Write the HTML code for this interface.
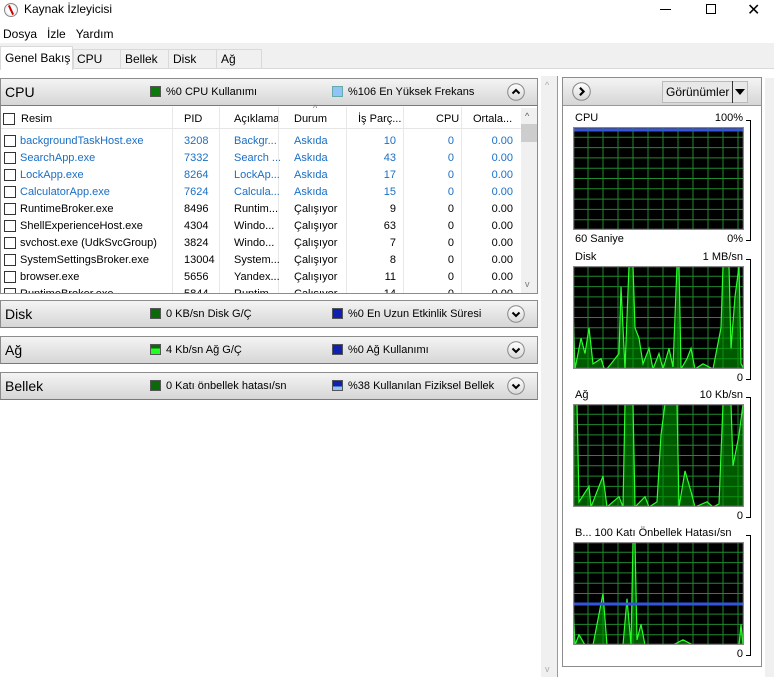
<!DOCTYPE html>
<html><head><meta charset="utf-8"><style>
*{margin:0;padding:0;box-sizing:border-box}
body{width:774px;height:677px;overflow:hidden;background:#fff;font-family:"Segoe UI","Liberation Sans","DejaVu Sans",sans-serif;font-size:11px;color:#000;position:relative}
.a{position:absolute}
.hdr{position:absolute;left:0;width:538px;height:28px;background:linear-gradient(#f4f4f4,#d6d6d6);border:1px solid #8c8c8c;border-bottom-color:#7a7a7a}
.hdr .t{position:absolute;left:4px;top:5px;font-size:14px}
.hdr .l1,.hdr .l2{position:absolute;top:7px;font-size:11px}
.hdr .l1{left:149px}.hdr .l2{left:331px}
.sq{display:inline-block;width:11px;height:11px;vertical-align:-2px;margin-right:5px;border:1px solid #555}
.btn{position:absolute;right:12px;top:4px;width:18px;height:18px}
.row{position:absolute;left:0;height:17px;width:520px}
.row span{position:absolute;top:2px}
.cb{position:absolute;left:3px;top:2px;width:12px;height:12px;border:1px solid #333;background:#fff}
.blue{color:#1a6fc4}
.col{position:absolute;top:107px;width:1px;height:186px;background:#e8e8e8}
.lbl{position:absolute;font-size:11px}
.brk{position:absolute;left:746px;width:5px;border:1px solid #000;border-left:none}
</style></head><body>
<div class="a" style="left:4px;top:3px;width:14px;height:14px;border-radius:50%;border:1px solid #888;background:radial-gradient(#fff 40%,#ddd)"><div class="a" style="left:5px;top:1px;width:2px;height:10px;background:#c00;transform:rotate(-25deg)"></div></div>
<div class="a" style="left:24px;top:2px;font-size:12px">Kaynak İzleyicisi</div>
<div class="a" style="left:660px;top:9px;width:11px;height:1px;background:#000"></div>
<div class="a" style="left:706px;top:4px;width:10px;height:10px;border:1px solid #000"></div>
<div class="a" style="left:747px;top:0px;font-size:16px;font-weight:300">✕</div>
<div class="a" style="left:3px;top:27px;font-size:12px">Dosya&nbsp;&nbsp;&nbsp;İzle&nbsp;&nbsp;&nbsp;Yardım</div>
<div class="a" style="left:0;top:43px;width:774px;height:26px;background:#f0f0f0;border-bottom:1px solid #d9d9d9"></div>
<div class="a" style="left:73px;top:49px;width:189px;height:20px;border:1px solid #d9d9d9;background:#f0f0f0"></div>
<div class="a" style="left:120px;top:49px;width:1px;height:20px;background:#d9d9d9"></div>
<div class="a" style="left:168px;top:49px;width:1px;height:20px;background:#d9d9d9"></div>
<div class="a" style="left:216px;top:49px;width:1px;height:20px;background:#d9d9d9"></div>
<div class="a" style="left:0;top:46px;width:73px;height:24px;background:#fff;border:1px solid #d9d9d9;border-bottom:none"></div>
<div class="a" style="left:5px;top:51px;font-size:12px">Genel Bakış</div>
<div class="a" style="left:77px;top:52px;font-size:12px">CPU</div>
<div class="a" style="left:125px;top:52px;font-size:12px">Bellek</div>
<div class="a" style="left:173px;top:52px;font-size:12px">Disk</div>
<div class="a" style="left:221px;top:52px;font-size:12px">Ağ</div>
<div class="a" style="left:0;top:78px;width:538px;height:216px;border:1px solid #8c8c8c"></div>
<div class="hdr" style="top:78px"><span class="t">CPU</span><span class="l1"><i class="sq" style="background:#0a7a0a"></i>%0 CPU Kullanımı</span><span class="l2"><i class="sq" style="background:#8ec4f7;border-color:#6aa"></i>%106 En Yüksek Frekans</span><svg class="btn" viewBox="0 0 18 18"><defs><linearGradient id="bg" x1="0" y1="0" x2="0" y2="1"><stop offset="0" stop-color="#fff"/><stop offset="1" stop-color="#d8d8d8"/></linearGradient></defs><circle cx="9" cy="9" r="8.3" fill="url(#bg)" stroke="#888"/><path d="M5.5 10.5 L9 7 L12.5 10.5" fill="none" stroke="#000" stroke-width="2"/></svg></div>
<div class="a" style="left:1px;top:107px;width:520px;height:22px;border-bottom:1px solid #e5e5e5"></div>
<div class="cb" style="top:113px"></div>
<div class="a" style="left:21px;top:113px">Resim</div>
<div class="a" style="left:184px;top:113px">PID</div>
<div class="a" style="left:234px;top:113px">Açıklama</div>
<div class="a" style="left:294px;top:113px">Durum</div>
<div class="a" style="left:313px;top:103px;font-size:9px;color:#777">^</div>
<div class="a" style="left:358px;top:113px">İş Parç...</div>
<div class="a" style="left:436px;top:113px">CPU</div>
<div class="a" style="left:473px;top:113px">Ortala...</div>
<div class="col" style="left:172px"></div><div class="col" style="left:219px"></div><div class="col" style="left:278px"></div><div class="col" style="left:346px"></div><div class="col" style="left:403px"></div><div class="col" style="left:461px"></div>
<div class="a" style="left:521px;top:108px;width:16px;height:185px;background:#f0f0f0"></div>
<div class="a" style="left:525px;top:111px;font-size:9px;color:#555">^</div>
<div class="a" style="left:521px;top:124px;width:16px;height:18px;background:#cdcdcd"></div>
<div class="a" style="left:525px;top:279px;font-size:9px;color:#777">v</div>
<div class="a" style="left:1px;top:133px;width:520px;height:160px;overflow:hidden">
<div id="rows"></div>
</div>
<div class="hdr" style="top:300px"><span class="t">Disk</span><span class="l1"><i class="sq" style="background:#0a6a0a"></i>0 KB/sn Disk G/Ç</span><span class="l2"><i class="sq" style="background:#1020b0"></i>%0 En Uzun Etkinlik Süresi</span><svg class="btn" viewBox="0 0 18 18"><circle cx="9" cy="9" r="8.3" fill="url(#bg)" stroke="#888"/><path d="M5.5 7.5 L9 11 L12.5 7.5" fill="none" stroke="#000" stroke-width="2"/></svg></div>
<div class="hdr" style="top:336px"><span class="t">Ağ</span><span class="l1"><i class="sq" style="background:linear-gradient(#0a6a0a 40%,#2f2 40%)"></i>4 Kb/sn Ağ G/Ç</span><span class="l2"><i class="sq" style="background:#1020b0"></i>%0 Ağ Kullanımı</span><svg class="btn" viewBox="0 0 18 18"><circle cx="9" cy="9" r="8.3" fill="url(#bg)" stroke="#888"/><path d="M5.5 7.5 L9 11 L12.5 7.5" fill="none" stroke="#000" stroke-width="2"/></svg></div>
<div class="hdr" style="top:372px"><span class="t">Bellek</span><span class="l1"><i class="sq" style="background:#0a6a0a"></i>0 Katı önbellek hatası/sn</span><span class="l2"><i class="sq" style="background:linear-gradient(#1020b0 60%,#8ec4f7 60%)"></i>%38 Kullanılan Fiziksel Bellek</span><svg class="btn" viewBox="0 0 18 18"><circle cx="9" cy="9" r="8.3" fill="url(#bg)" stroke="#888"/><path d="M5.5 7.5 L9 11 L12.5 7.5" fill="none" stroke="#000" stroke-width="2"/></svg></div>
<div class="a" style="left:541px;top:76px;width:16px;height:601px;background:#f0f0f0"></div>
<div class="a" style="left:545px;top:80px;font-size:9px;color:#aaa">^</div>
<div class="a" style="left:545px;top:664px;font-size:9px;color:#aaa">v</div>
<div class="a" style="left:557px;top:76px;width:1px;height:601px;background:#999"></div>
<div class="a" style="left:562px;top:77px;width:200px;height:590px;border:1px solid #8c8c8c"></div>
<div class="a" style="left:563px;top:78px;width:198px;height:28px;background:linear-gradient(#f4f4f4,#d6d6d6);border-bottom:1px solid #999"></div>
<svg class="a" style="left:572px;top:82px" width="19" height="19" viewBox="0 0 18 18"><circle cx="9" cy="9" r="8.3" fill="url(#bg)" stroke="#888"/><path d="M7.5 5.5 L11 9 L7.5 12.5" fill="none" stroke="#000" stroke-width="2"/></svg>
<div class="a" style="left:662px;top:81px;width:86px;height:22px;background:#e8e8e8;border:1px solid #bbb"></div>
<div class="a" style="left:666px;top:85px;font-size:12px">Görünümler</div>
<div class="a" style="left:732px;top:81px;width:1px;height:22px;background:#333"></div>
<div class="a" style="left:735px;top:89px;width:0;height:0;border-left:5px solid transparent;border-right:5px solid transparent;border-top:6px solid #000"></div>
<div class="a" style="left:765px;top:78px;width:9px;height:599px;background:#f0f0f0"></div>
<div id="graphs"></div>
<script>
var R=[["backgroundTaskHost.exe","3208","Backgr...","Askıda","10",1],["SearchApp.exe","7332","Search ...","Askıda","43",1],["LockApp.exe","8264","LockAp...","Askıda","17",1],["CalculatorApp.exe","7624","Calcula...","Askıda","15",1],["RuntimeBroker.exe","8496","Runtim...","Çalışıyor","9",0],["ShellExperienceHost.exe","4304","Windo...","Çalışıyor","63",0],["svchost.exe (UdkSvcGroup)","3824","Windo...","Çalışıyor","7",0],["SystemSettingsBroker.exe","13004","System...","Çalışıyor","8",0],["browser.exe","5656","Yandex...","Çalışıyor","11",0],["RuntimeBroker.exe","5844","Runtim...","Çalışıyor","14",0]];
var h="";R.forEach(function(r,i){var c=r[5]?' class="blue"':'';h+='<div class="row" style="top:'+(i*17)+'px"><div class="cb"></div><span'+c+' style="left:19px">'+r[0]+'</span><span'+c+' style="left:183px">'+r[1]+'</span><span'+c+' style="left:233px">'+r[2]+'</span><span'+c+' style="left:293px">'+r[3]+'</span><span'+c+' style="left:346px;width:49px;text-align:right">'+r[4]+'</span><span'+c+' style="left:403px;width:50px;text-align:right">0</span><span'+c+' style="left:461px;width:51px;text-align:right">0.00</span></div>'});
document.getElementById("rows").innerHTML=h;
function grid(w,hh){var s="";for(var x=0;x<=w;x+=15)s+='<line x1="'+x+'" y1="0" x2="'+x+'" y2="'+hh+'"/>';for(var y=0;y<=hh;y+=10.3)s+='<line x1="0" y1="'+y+'" x2="'+w+'" y2="'+y+'"/>';return s}
var G=[{t:118,l:"CPU",r:"100%",bt:"60 Saniye",br:"0%",pts:null,blue:3},
{t:257,l:"Disk",r:"1 MB/sn",bt:"",br:"0",pts:[[0,40],[2,100],[8,70],[12,85],[16,60],[20,95],[28,90],[32,102],[38,95],[46,85],[48,20],[52,100],[56,0],[60,0],[62,60],[66,70],[70,95],[76,80],[80,100],[86,85],[90,100],[96,80],[100,98],[104,0],[106,0],[108,100],[114,90],[118,80],[122,100],[130,95],[140,100],[148,60],[150,0],[156,0],[158,80],[162,30],[166,0],[168,95]],blue:-1},
{t:395,l:"Ağ",r:"10 Kb/sn",bt:"",br:"0",pts:[[0,0],[4,0],[6,95],[16,80],[18,100],[30,70],[34,100],[46,90],[50,100],[52,0],[60,0],[62,100],[72,90],[76,100],[84,95],[88,30],[92,0],[104,0],[106,100],[112,65],[118,85],[122,100],[134,95],[140,100],[146,97],[150,0],[158,0],[160,60],[166,30],[170,0]],blue:-1},
{t:533,l:"B...  100 Katı Önbellek Hatası/sn",r:"",bt:"",br:"0",pts:[[0,60],[2,100],[6,90],[12,100],[20,100],[30,50],[34,100],[50,100],[54,55],[58,100],[60,0],[62,0],[64,95],[68,80],[72,100],[100,100],[110,95],[120,100],[140,100],[150,100],[166,100],[168,80],[170,100]],blue:62}];
var o="";G.forEach(function(g){var gy=g.t+9,H=103;o+='<div class="lbl" style="left:575px;top:'+(g.t-6)+'px;width:168px">'+g.l+'<span style="position:absolute;right:0">'+g.r+'</span></div>';
o+='<div class="brk" style="top:'+(g.t+2)+'px;height:'+(H+18)+'px"></div>';
var s='<svg class="a" style="left:573px;top:'+gy+'px" width="171" height="'+H+'" viewBox="0 0 171 '+H+'"><rect width="171" height="'+H+'" fill="#000"/><g stroke="#1f8a2e" stroke-width="1">'+grid(171,H)+'</g>';
if(g.pts){var p=g.pts.map(function(q){return q[0]+','+(q[1]/100*H)}).join(' ');s+='<polygon points="0,'+H+' '+p+' 171,'+H+'" fill="rgba(0,150,0,0.6)" stroke="#2bff2b" stroke-width="1.2"/>'}
if(g.blue>=0)s+='<line x1="0" x2="171" y1="'+g.blue+'" y2="'+g.blue+'" stroke="#3355dd" stroke-width="3"/>';
s+='<rect x="0.5" y="0.5" width="170" height="'+(H-1)+'" fill="none" stroke="#888" stroke-width="1.5"/></svg>';o+=s;
o+='<div class="lbl" style="left:575px;top:'+(gy+H+3)+'px;width:168px">'+g.bt+'<span style="position:absolute;right:0">'+g.br+'</span></div>';});
document.getElementById("graphs").innerHTML=o;
</script>
</body></html>
